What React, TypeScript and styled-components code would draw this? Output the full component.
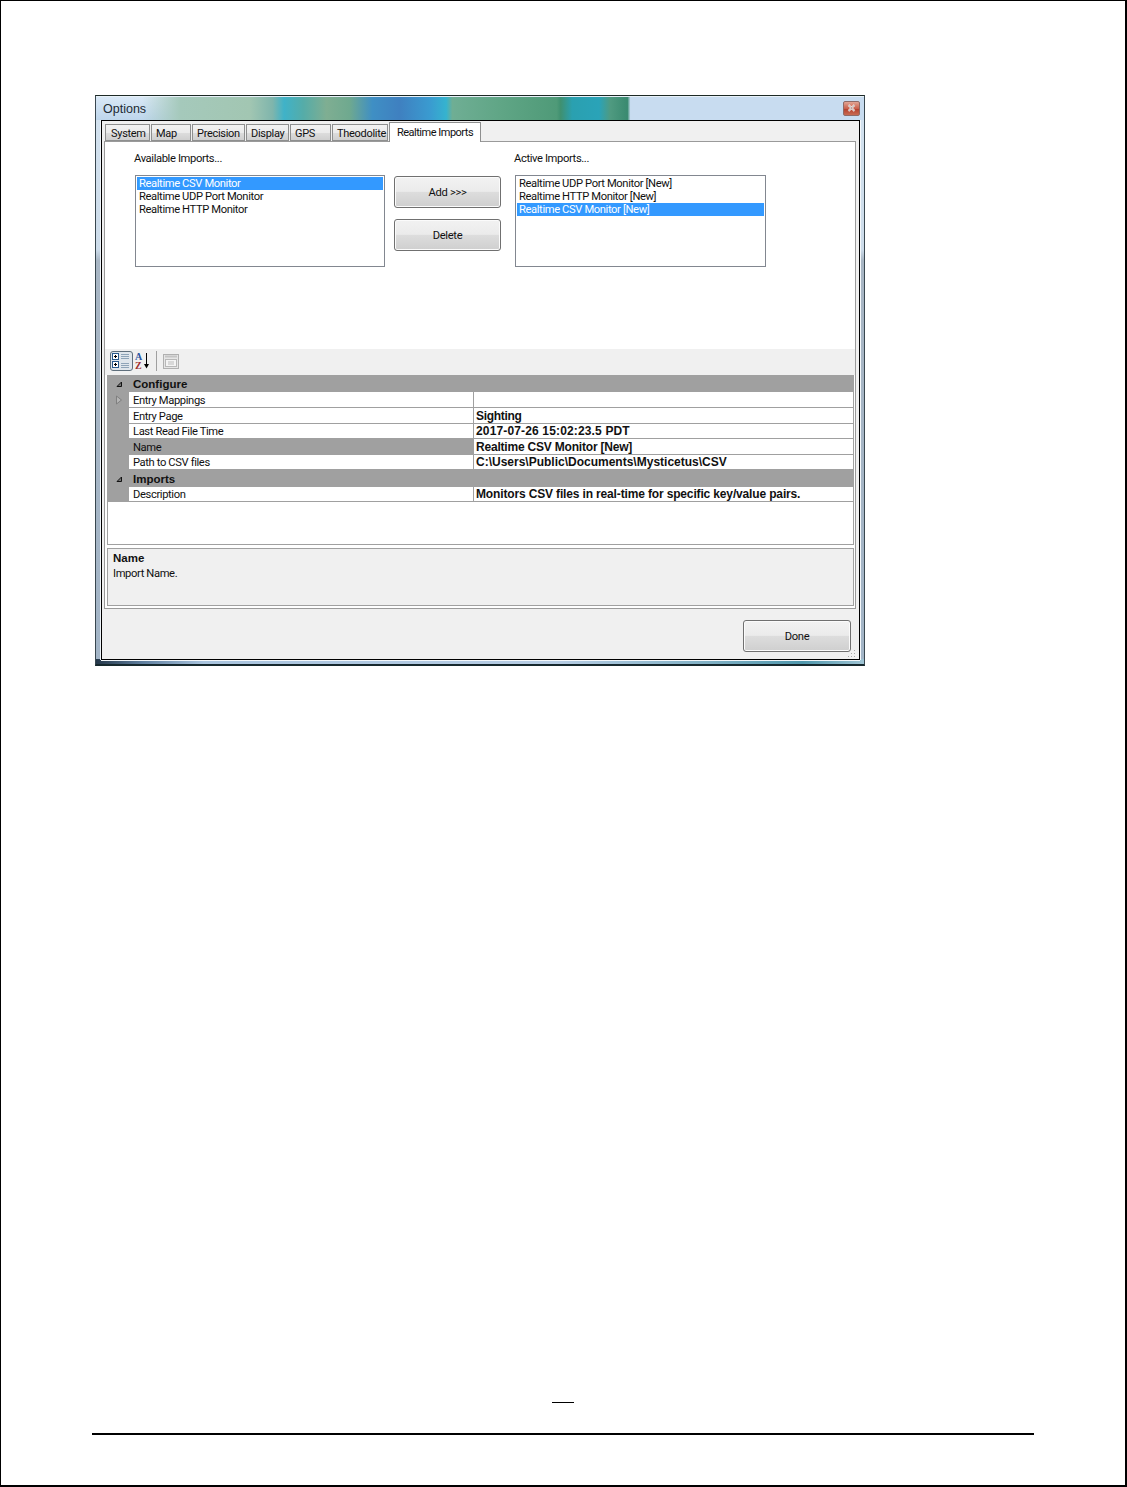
import React from 'react'
import styled, { createGlobalStyle } from 'styled-components'

const GlobalStyle = createGlobalStyle`
  html, body {
    margin: 0;
    padding: 0;
    background: #fff;
  }
  * {
    box-sizing: border-box;
  }
`

const UI_FONT = `Roboto, "Liberation Sans", Arial, sans-serif`
const BOLD_FONT = `"Liberation Sans", Arial, sans-serif`

const Page = styled.div`
  width: 1127px;
  height: 1487px;
  border-top: 1px solid #000;
  border-left: 1px solid #000;
  border-right: 2px solid #000;
  border-bottom: 2px solid #000;
  padding: 94px 0 0 94px;
  display: flex;
  flex-direction: column;
  font-family: ${UI_FONT};
  color: #111;
  font-size: 11.2px;
  letter-spacing: -0.38px;
  background: #fff;
`

const Win = styled.div`
  width: 770px;
  height: 571px;
  border: 1px solid #39474f;
  border-top-color: #1d2a26;
  border-bottom: 2px solid #17292e;
  padding: 0 4px 4px 5px;
  display: flex;
  flex-direction: column;
  background:
    linear-gradient(90deg, #25384a 0%, #5f7f9f 6%, #a9c4de 14%, #b7cde4 60%, #7fb0c4 80%, #4f98ad 92%, #9fc4d4 100%) bottom / 100% 5px no-repeat,
    linear-gradient(180deg, #d3e2ef 0%, #cddcea 27%, #a8b6c4 29%, #a3b5c7 100%);
`

const TitleBar = styled.div`
  height: 24px;
  margin: 0 -4px 0 -5px;
  padding: 1px 4px 0 7px;
  flex-shrink: 0;
  display: flex;
  align-items: center;
  justify-content: space-between;
  border-top: 1px solid #e8f1f8;
  background:
    linear-gradient(90deg,
      rgba(182, 219, 226, 0) 6%,
      #a5c9bb 11%,
      #a2c6b2 20%,
      #7fb5ac 23%,
      #3fb2c8 24.5%,
      #55aca8 27%,
      #7fae92 30%,
      #6fa98f 33%,
      #3f8fc4 36%,
      #3f80c0 39.5%,
      #3a9bd0 43.5%,
      #35b3cf 45.6%,
      #6fae94 46.4%,
      #5fa585 53%,
      #4f9a78 60%,
      #3f9070 60.5%,
      #2aa0b0 62%,
      #2aa3b8 65.5%,
      #4f9a80 67%,
      #3a8a70 69.2%,
      #c8dcf0 69.6%),
    linear-gradient(180deg, #d9e8f6 0%, #bed6ec 100%);
`

const TitleText = styled.span`
  font-family: ${BOLD_FONT};
  letter-spacing: 0;
  font-size: 12.5px;
  color: #1c2a33;
`

const CloseButton = styled.button`
  width: 17px;
  height: 15px;
  margin-top: -2px;
  padding: 0;
  border: 1px solid #8f6a66;
  border-radius: 2px;
  background: linear-gradient(180deg, #e2a594 0%, #c9604c 50%, #b5412e 55%, #c76a52 100%);
  display: flex;
  align-items: center;
  justify-content: center;
`

const Client = styled.div`
  flex: 1;
  border: 1px solid #000;
  box-shadow: 0 1px 0 #f4f8fb, 1px 0 0 #f4f8fb, -1px 0 0 #eef3f8;
  background: #f0f0f0;
  padding: 1px 3px 0 2px;
  display: flex;
  flex-direction: column;
`

const TabStrip = styled.div`
  height: 19px;
  padding-left: 1px;
  display: flex;
  align-items: flex-end;
  position: relative;
  z-index: 1;
`

const Tab = styled.div<{ $w: number; $active?: boolean }>`
  width: ${p => p.$w}px;
  height: ${p => (p.$active ? 20 : 17)}px;
  margin-right: ${p => (p.$active ? 0 : 1)}px;
  margin-bottom: ${p => (p.$active ? -1 : 0)}px;
  padding: ${p => (p.$active ? 0 : 2)}px 0 0 ${p => (p.$active ? 7 : 4)}px;
  display: flex;
  align-items: center;
  white-space: nowrap;
  font-size: 11px;
  letter-spacing: ${p => (p.$active ? -0.5 : -0.3)}px;
  border: 1px solid #8e8f8f;
  border-bottom: ${p => (p.$active ? 'none' : '1px solid #8e8f8f')};
  background: ${p => (p.$active ? '#fff' : 'linear-gradient(180deg, #f2f2f2 0%, #ebebeb 50%, #dcdcdc 55%, #cfcfcf 100%)')};

  &:first-child {
    padding-left: 5px;
  }
`

const TabPane = styled.div`
  width: 752px;
  height: 468px;
  border: 1px solid #9a9a9a;
  background: #fff;
  display: flex;
  flex-direction: column;
`

const ImportsPanel = styled.div`
  height: 207px;
  padding: 10px 0 0 29px;
  display: grid;
  grid-template-columns: 250px 130px 251px;
  align-items: start;
`

const ListColumn = styled.div`
  display: flex;
  flex-direction: column;
`

const ListLabel = styled.div`
  height: 14px;
  line-height: 14px;
  white-space: nowrap;
`

const ListBox = styled.div`
  width: 100%;
  height: 92px;
  margin-top: 9px;
  margin-left: 1px;
  border: 1px solid #828790;
  padding: 1px;
  background: #fff;
`

const ListRow = styled.div<{ $selected?: boolean }>`
  height: 13px;
  line-height: 13px;
  padding-left: 2px;
  white-space: nowrap;
  background: ${p => (p.$selected ? '#3399ff' : 'transparent')};
  color: ${p => (p.$selected ? '#fff' : '#111')};
`

const ButtonColumn = styled.div`
  padding: 24px 0 0 10px;
  display: flex;
  flex-direction: column;
  gap: 11px;
`

const PushButton = styled.button<{ $w: number; $h: number }>`
  width: ${p => p.$w}px;
  height: ${p => p.$h}px;
  padding: 0;
  border: 1px solid #707070;
  border-radius: 3px;
  font-family: ${UI_FONT};
  font-size: 11.2px;
  letter-spacing: -0.3px;
  color: #111;
  box-shadow: inset 0 0 0 1px #fbfbfb;
  background: linear-gradient(180deg, #f2f2f2 0%, #ebebeb 48%, #dddddd 50%, #cfcfcf 100%);
`

const Toolbar = styled.div`
  height: 26px;
  padding: 2px 0 0 5px;
  background: #f0f0f0;
  display: flex;
  align-items: flex-start;
`

const ToggleButton = styled.div`
  width: 23px;
  height: 20px;
  border: 1px solid #5f6f7c;
  border-radius: 3px;
  background: #dfe6ec;
  display: flex;
  align-items: center;
  justify-content: center;
`

const IconSlot = styled.div`
  width: 21px;
  height: 20px;
  display: flex;
  align-items: center;
  justify-content: center;
`

const ToolSep = styled.div`
  width: 1px;
  height: 20px;
  margin: 0 3px 0 2px;
  background: #a0a0a0;
`

const Grid = styled.div`
  width: 747px;
  height: 170px;
  margin-left: 2px;
  border: 1px solid #a0a0a0;
  border-top: none;
  background: #fff;
`

const CategoryRow = styled.div<{ $h: number }>`
  height: ${p => p.$h}px;
  display: flex;
  align-items: center;
  background: #a0a0a0;
  font-family: ${BOLD_FONT};
  letter-spacing: 0;
  font-weight: bold;
  font-size: 11.5px;
  color: #111;
`

const CategoryName = styled.span`
  padding-left: 4px;
`

const Gutter = styled.div`
  width: 21px;
  flex-shrink: 0;
  align-self: stretch;
  background: #a0a0a0;
  display: flex;
  align-items: center;
  justify-content: center;
`

const PropRow = styled.div<{ $h: number }>`
  height: ${p => p.$h}px;
  display: flex;
`

const PropName = styled.div<{ $selected?: boolean; $tall?: boolean }>`
  width: 344px;
  padding: ${p => (p.$tall ? 1 : 0)}px 0 0 4px;
  flex-shrink: 0;
  display: flex;
  align-items: center;
  white-space: nowrap;
  border-bottom: 1px solid #a0a0a0;
  background: ${p => (p.$selected ? '#a0a0a0' : '#fff')};
`

const PropValue = styled.div<{ $track?: number }>`
  flex: 1;
  padding-left: 2px;
  display: flex;
  align-items: center;
  white-space: nowrap;
  font-family: ${BOLD_FONT};
  font-size: 12px;
  font-weight: bold;
  letter-spacing: ${p => p.$track ?? 0}px;
  color: #111;
  border-left: 1px solid #a0a0a0;
  border-bottom: 1px solid #a0a0a0;
`

const HelpBox = styled.div`
  width: 747px;
  height: 58px;
  margin: 3px 0 0 2px;
  padding: 3px 5px;
  border: 1px solid #a0a0a0;
  background: #f0f0f0;
  line-height: 13px;
`

const HelpTitle = styled.div`
  font-family: ${BOLD_FONT};
  letter-spacing: 0;
  font-weight: bold;
  font-size: 11.5px;
  margin-bottom: 2px;
`

const Footer = styled.div`
  flex: 1;
  padding: 11px 5px 0 0;
  display: flex;
  justify-content: flex-end;
  position: relative;
`

const Grip = styled.svg`
  position: absolute;
  right: 0;
  bottom: 0;
`

const PageMark = styled.div`
  width: 22px;
  height: 1px;
  margin: auto 0 0 457px;
  background: #000;
`

const PageRule = styled.div`
  width: 942px;
  height: 2px;
  margin: 30px 0 50px -3px;
  background: #000;
`

const Collapse = () => (
  <svg width="8" height="8" viewBox="0 0 8 8">
    <path d="M6.5 2 L6.5 6.5 L2 6.5 Z" fill="#777" stroke="#111" strokeWidth="1" />
  </svg>
)

const Expand = () => (
  <svg width="8" height="10" viewBox="0 0 8 10">
    <path d="M1.5 1 L6.5 5 L1.5 9 Z" fill="#b5b5b5" stroke="#7f7f7f" strokeWidth="1" />
  </svg>
)

const CategorizedIcon = () => (
  <svg width="19" height="16" viewBox="0 0 19 16">
    <rect x="0.5" y="0.5" width="6" height="6" fill="#fff" stroke="#2a5a8c" />
    <rect x="0.5" y="8.5" width="6" height="6" fill="#fff" stroke="#2a5a8c" />
    <path d="M2 3.5h3M3.5 2v3M2 11.5h3M3.5 10v3" stroke="#000" />
    <path d="M9 1.5h8M9 3.5h8M9 5.5h8M9 10.5h8M9 12.5h8M9 14.5h8" stroke="#8ea4b8" />
  </svg>
)

const SortIcon = () => (
  <svg width="20" height="18" viewBox="0 0 20 18">
    <text x="1" y="8" fontSize="10" fontWeight="bold" fontFamily="Liberation Serif" fill="#2a55a0">A</text>
    <text x="1" y="17" fontSize="10" fontWeight="bold" fontFamily="Liberation Serif" fill="#a03030">Z</text>
    <path d="M12.5 1v14" stroke="#000" />
    <path d="M10 12h5L12.5 16.5Z" fill="#000" />
  </svg>
)

const PagesIcon = () => (
  <svg width="16" height="15" viewBox="0 0 16 15">
    <rect x="0.5" y="0.5" width="15" height="14" fill="#e6e6e6" stroke="#b0b0b0" />
    <path d="M2 2.5h12" stroke="#c4c4c4" strokeWidth="2" />
    <rect x="2.5" y="5.5" width="11" height="7" fill="#f4f4f4" stroke="#b8b8b8" />
    <path d="M5 8h6M5 10h6" stroke="#bcbcbc" />
  </svg>
)

const CloseGlyph = () => (
  <svg width="9" height="8" viewBox="0 0 9 8">
    <path d="M1.5 1 L7.5 7 M7.5 1 L1.5 7" stroke="#fff" strokeWidth="2" />
    <path d="M1.5 1 L7.5 7 M7.5 1 L1.5 7" stroke="#5a2a22" strokeWidth="0.5" />
  </svg>
)

const tabs = [
  { label: 'System', w: 45 },
  { label: 'Map', w: 40 },
  { label: 'Precision', w: 53 },
  { label: 'Display', w: 43 },
  { label: 'GPS', w: 41 },
  { label: 'Theodolite', w: 56 },
]

const available = ['Realtime CSV Monitor', 'Realtime UDP Port Monitor', 'Realtime HTTP Monitor']
const active = ['Realtime UDP Port Monitor [New]', 'Realtime HTTP Monitor [New]', 'Realtime CSV Monitor [New]']

const App: React.FC = () => {
  return (
    <Page>
      <GlobalStyle />
      <Win>
        <TitleBar>
          <TitleText>Options</TitleText>
          <CloseButton aria-label="Close"><CloseGlyph /></CloseButton>
        </TitleBar>
        <Client>
          <TabStrip>
            {tabs.map(t => <Tab key={t.label} $w={t.w}>{t.label}</Tab>)}
            <Tab $w={92} $active>Realtime Imports</Tab>
          </TabStrip>
          <TabPane>
            <ImportsPanel>
              <ListColumn>
                <ListLabel>Available Imports...</ListLabel>
                <ListBox>
                  {available.map((v, i) => <ListRow key={v} $selected={i === 0}>{v}</ListRow>)}
                </ListBox>
              </ListColumn>
              <ButtonColumn>
                <PushButton $w={107} $h={32}>Add &gt;&gt;&gt;</PushButton>
                <PushButton $w={107} $h={32}>Delete</PushButton>
              </ButtonColumn>
              <ListColumn>
                <ListLabel>Active Imports...</ListLabel>
                <ListBox>
                  {active.map((v, i) => <ListRow key={v} $selected={i === 2}>{v}</ListRow>)}
                </ListBox>
              </ListColumn>
            </ImportsPanel>
            <Toolbar>
              <ToggleButton><CategorizedIcon /></ToggleButton>
              <IconSlot><SortIcon /></IconSlot>
              <ToolSep />
              <IconSlot><PagesIcon /></IconSlot>
            </Toolbar>
            <Grid>
              <CategoryRow $h={17}><Gutter><Collapse /></Gutter><CategoryName>Configure</CategoryName></CategoryRow>
              <PropRow $h={16}>
                <Gutter><Expand /></Gutter>
                <PropName $tall>Entry Mappings</PropName>
                <PropValue />
              </PropRow>
              <PropRow $h={16}>
                <Gutter />
                <PropName $tall>Entry Page</PropName>
                <PropValue $track={-0.3}>Sighting</PropValue>
              </PropRow>
              <PropRow $h={15}>
                <Gutter />
                <PropName>Last Read File Time</PropName>
                <PropValue $track={0.15}>2017-07-26 15:02:23.5 PDT</PropValue>
              </PropRow>
              <PropRow $h={16}>
                <Gutter />
                <PropName $selected $tall>Name</PropName>
                <PropValue $track={-0.2}>Realtime CSV Monitor [New]</PropValue>
              </PropRow>
              <PropRow $h={15}>
                <Gutter />
                <PropName>Path to CSV files</PropName>
                <PropValue>C:\Users\Public\Documents\Mysticetus\CSV</PropValue>
              </PropRow>
              <CategoryRow $h={17}><Gutter><Collapse /></Gutter><CategoryName>Imports</CategoryName></CategoryRow>
              <PropRow $h={15}>
                <Gutter />
                <PropName>Description</PropName>
                <PropValue $track={-0.15}>Monitors CSV files in real-time for specific key/value pairs.</PropValue>
              </PropRow>
            </Grid>
            <HelpBox>
              <HelpTitle>Name</HelpTitle>
              Import Name.
            </HelpBox>
          </TabPane>
          <Footer>
            <PushButton $w={108} $h={32}>Done</PushButton>
            <Grip width="10" height="10" viewBox="0 0 10 10">
              <path d="M8 1h1v1H8zM8 4h1v1H8zM5 4h1v1H5zM8 7h1v1H8zM5 7h1v1H5zM2 7h1v1H2z" fill="#a8a8a8" />
            </Grip>
          </Footer>
        </Client>
      </Win>
      <PageMark />
      <PageRule />
    </Page>
  )
}

export default App
